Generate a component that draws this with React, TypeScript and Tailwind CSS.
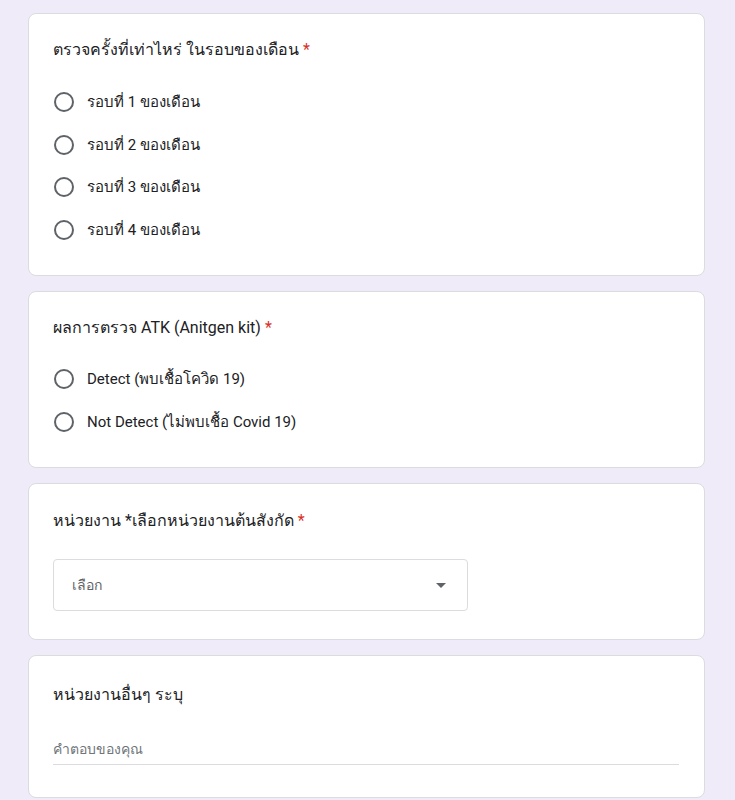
const font = { fontFamily: 'Roboto, "Noto Sans", "DejaVu Sans", sans-serif' };

function Radio({ label }: { label: string }) {
  return (
    <div className="flex items-center h-[42.5px]">
      <div className="w-5 h-5 rounded-full border-2 border-[#5f6368] ml-[1px]" />
      <span className="ml-[13px] text-[15px] text-[#202124] leading-5">{label}</span>
    </div>
  );
}

function Title({ text, required }: { text: string; required?: boolean }) {
  return (
    <div className="text-[16px] leading-6 text-[#202124]">
      {text}
      {required && <span className="text-[#d93025] ml-1">*</span>}
    </div>
  );
}

export default function App() {
  return (
    <div className="min-h-[800px] bg-[#efebf8] pt-[13px] pb-4" style={font}>
      <div className="ml-[28px] w-[677px] flex flex-col gap-[15px]">
        <div className="bg-white rounded-lg border border-[#dadce0] px-6 pt-[24px] pb-[24px]">
          <Title text="ตรวจครั้งที่เท่าไหร่ ในรอบของเดือน" required />
          <div className="mt-[19px]">
            <Radio label="รอบที่ 1 ของเดือน" />
            <Radio label="รอบที่ 2 ของเดือน" />
            <Radio label="รอบที่ 3 ของเดือน" />
            <Radio label="รอบที่ 4 ของเดือน" />
          </div>
        </div>

        <div className="bg-white rounded-lg border border-[#dadce0] px-6 pt-[24px] pb-[24px]">
          <Title text="ผลการตรวจ ATK (Anitgen kit)" required />
          <div className="mt-[18px]">
            <Radio label="Detect (พบเชื้อโควิด 19)" />
            <Radio label="Not Detect (ไม่พบเชื้อ Covid 19)" />
          </div>
        </div>

        <div className="bg-white rounded-lg border border-[#dadce0] px-6 pt-[25px] pb-[28px]">
          <Title text="หน่วยงาน *เลือกหน่วยงานต้นสังกัด" required />
          <div className="mt-[26px] w-[415px] h-[52px] border border-[#dadce0] rounded flex items-center justify-between pl-[18px] pr-[21px]">
            <span className="text-[14px] text-[#5f6368]">เลือก</span>
            <svg width="10" height="5" viewBox="0 0 10 5">
              <path d="M0 0 L10 0 L5 5 Z" fill="#5f6368" />
            </svg>
          </div>
        </div>

        <div className="bg-white rounded-lg border border-[#dadce0] px-6 pt-[27px] pb-[32px]">
          <div className="text-[16px] leading-6 text-[#202124] font-medium">หน่วยงานอื่นๆ ระบุ</div>
          <div className="mt-[30px] w-[626px] border-b border-[#dadce0] pb-[3px]">
            <span className="text-[14px] leading-6 text-[#70757a]">คำตอบของคุณ</span>
          </div>
        </div>
      </div>
    </div>
  );
}
